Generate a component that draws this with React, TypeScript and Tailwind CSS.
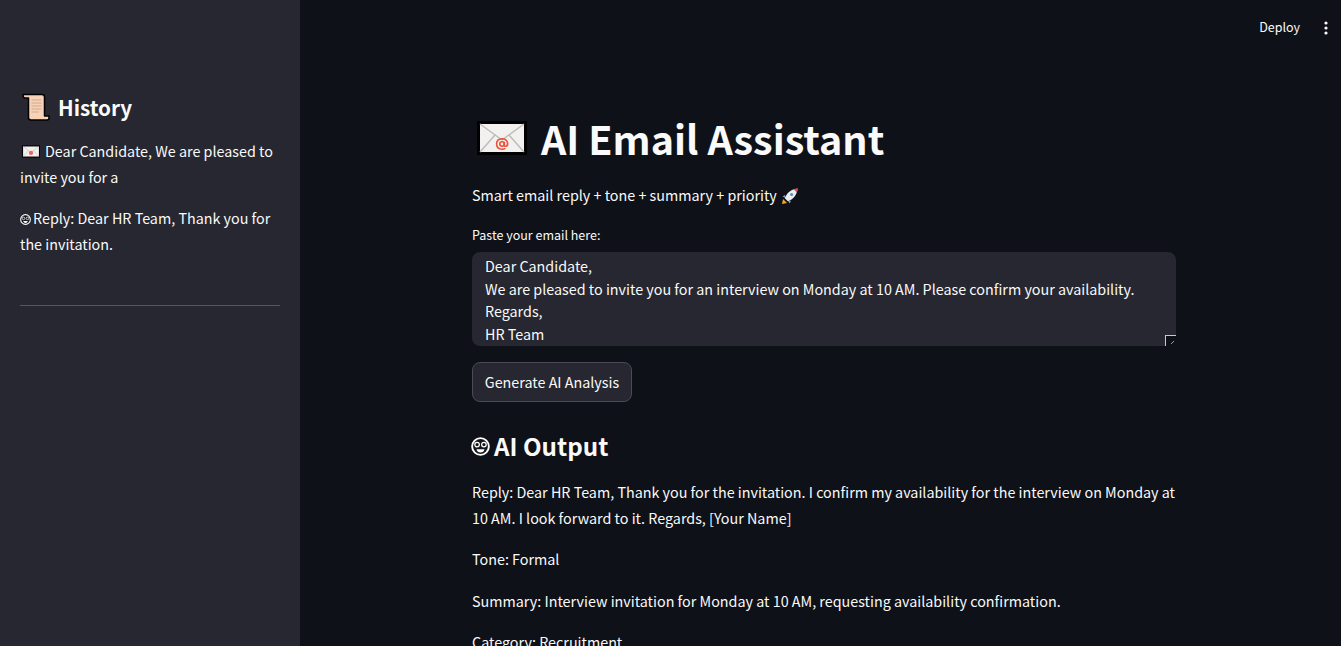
const font = { fontFamily: '"Noto Sans CJK SC", "Noto Sans", sans-serif' };

function Envelope({ className, stamp }: { className: string; stamp?: boolean }) {
  return (
    <svg viewBox="0 0 50 34" className={className} aria-hidden="true">
      <rect x="0" y="0" width="50" height="34" fill="#000" />
      <rect x="3" y="3" width="44" height="28" fill="#f2f1ef" />
      <path d="M3 3 L25 19 L47 3 M3 31 L18 14 M47 31 L32 14" fill="none" stroke="#bdbbb8" strokeWidth="1.4" />
      {stamp ? (
        <circle cx="25" cy="21" r="6" fill="#ee6a5c" />
      ) : (
        <g fill="none" stroke="#ee4f36" strokeWidth="1.6">
          <circle cx="25" cy="23" r="2.2" />
          <path d="M27.3 20.8 V24 Q27.3 25.6 29 25.2 Q31 24.6 30.6 22 Q29.8 17.8 25 17.8 Q19.6 18 19.6 23 Q19.8 28.2 25 28.2 Q27 28.2 28.4 27.4" />
        </g>
      )}
    </svg>
  );
}

function Scroll() {
  return (
    <svg viewBox="0 0 28 28" className="w-[28px] h-[28px] shrink-0" aria-hidden="true">
      <path d="M1 1.5 H20 Q22.5 1.5 22.5 4 V23 H27 V25 Q27 27 25 27 H9 Q6.5 27 6.5 24.5 V5 H2.5 Q1 4.5 1 1.5 Z" fill="#f6d2b8" stroke="#000" strokeWidth="1.5" strokeLinejoin="round" />
      <path d="M9.5 7 H19.5 M9.5 10 H19.5 M9.5 13 H19.5 M9.5 16 H19.5 M9.5 19 H17" stroke="#d3a98c" strokeWidth="1" />
    </svg>
  );
}

function Nerd({ className }: { className: string }) {
  return (
    <svg viewBox="0 0 20 20" className={className} aria-hidden="true">
      <circle cx="10" cy="10" r="8.8" fill="#14161c" stroke="#fff" strokeWidth="2" />
      <circle cx="6.4" cy="8" r="2.4" fill="#14161c" stroke="#fff" strokeWidth="1.3" />
      <circle cx="13.6" cy="8" r="2.4" fill="#14161c" stroke="#fff" strokeWidth="1.3" />
      <path d="M5.8 12.8 H14.2 Q13.4 16.2 10 16.2 Q6.6 16.2 5.8 12.8 Z" fill="#fff" />
    </svg>
  );
}

function Rocket() {
  return (
    <svg viewBox="0 0 18 18" className="inline-block w-[18px] h-[18px] ml-[1px] align-[-4px]" aria-hidden="true">
      <path d="M2 12 L1 17 L6 16 Z" fill="#f5a623" />
      <path d="M4 8 L1.5 9.5 L4.5 11 Z M10 14 L8.5 16.5 L7 13.5 Z" fill="#7ea7c9" />
      <path d="M3.8 11.2 C5.5 6 10 2 16.6 1.4 C16 8 12 12.5 6.8 14.2 Z" fill="#e8edf2" />
      <path d="M12.4 2.1 C14 1.6 15.3 1.5 16.6 1.4 C16.5 2.7 16.3 4 15.9 5.6 Z" fill="#e5484d" />
      <circle cx="10.6" cy="7.4" r="1.5" fill="#5b8db8" />
    </svg>
  );
}

export default function App() {
  return (
    <div className="flex h-screen overflow-hidden bg-[#0e1117] text-[#fafafa]" style={font}>
      <aside className="w-[300px] shrink-0 bg-[#262730] px-5 pt-[87px]">
        <h2 className="flex items-center gap-[8px] pl-[2px] text-[20.7px] leading-[40px] font-semibold mb-[11px]">
          <Scroll />
          <span>History</span>
        </h2>
        <p className="text-[14.34px] leading-[25.6px] mb-4">
          <Envelope stamp className="inline-block w-[18px] h-[13px] ml-[2px] mr-[5px] align-[-1px]" />
          Dear Candidate, We are pleased to invite you for a
        </p>
        <p className="text-[14.34px] leading-[25.6px]">
          <Nerd className="inline-block w-[11px] h-[11px] mr-[2px] align-[-1px]" />
          Reply: Dear HR Team, Thank you for the invitation.
        </p>
        <hr className="mt-[49px] border-0 border-t border-[#55565f]" />
      </aside>

      <main className="flex-1 min-w-0 relative">
        <div className="absolute top-0 right-0 h-[55px] flex items-center pr-[13px] gap-[24px]">
          <span className="text-[12.5px]">Deploy</span>
          <svg viewBox="0 0 4 14" className="w-[4px] h-[14px]" fill="#fafafa" aria-hidden="true">
            <circle cx="2" cy="2" r="1.6" />
            <circle cx="2" cy="7" r="1.6" />
            <circle cx="2" cy="12" r="1.6" />
          </svg>
        </div>

        <div className="w-[704px] ml-[172px] pt-[92px]">
          <h1 className="flex items-center pt-[20px] pb-[16px] text-[39.5px] leading-[52.8px] font-bold">
            <Envelope className="w-[50px] h-[34px] ml-[5px] mr-[14px] shrink-0" />
            <span>AI Email Assistant</span>
          </h1>
          <p className="text-[14.34px] leading-[25.6px] mt-[1px] mb-[18px]">
            Smart email reply + tone + summary + priority <Rocket />
          </p>
          <label className="block text-[12.5px] leading-[20px] mb-[7px]">Paste your email here:</label>
          <div className="relative h-[94px] rounded-lg bg-[#262730] overflow-hidden px-[13px] pt-[3px] text-[14.34px] leading-[22.4px]">
            <div>Dear Candidate,</div>
            <div>We are pleased to invite you for an interview on Monday at 10 AM. Please confirm your availability.</div>
            <div>Regards,</div>
            <div>HR Team</div>
            <div className="absolute right-0 bottom-0 w-[11px] h-[11px] border-l border-t border-[#c8c8cc] bg-[#0e1117]">
              <svg viewBox="0 0 10 10" className="w-[10px] h-[10px]" aria-hidden="true">
                <path d="M5 8 L8 5" stroke="#9a9aa0" strokeWidth="1" />
              </svg>
            </div>
          </div>
          <button className="mt-[16px] h-[40px] w-[160px] pb-[2px] rounded-lg border border-[#4a4b54] bg-[#262730] text-[14.34px] text-[#fafafa]" style={font}>
            Generate AI Analysis
          </button>
          <h2 className="flex items-center mt-[22px] text-[24.2px] leading-[44px] font-semibold">
            <Nerd className="w-[19px] h-[19px] mr-[4px] shrink-0 -ml-[1px]" />
            <span>AI Output</span>
          </h2>
          <div className="mt-[10.7px] text-[14.34px] leading-[25.6px]">
            <p className="mb-4">Reply: Dear HR Team, Thank you for the invitation. I confirm my availability for the interview on Monday at 10 AM. I look forward to it. Regards, [Your Name]</p>
            <p className="mb-4">Tone: Formal</p>
            <p className="mb-4">Summary: Interview invitation for Monday at 10 AM, requesting availability confirmation.</p>
            <p>Category: Recruitment</p>
          </div>
        </div>
      </main>
    </div>
  );
}
